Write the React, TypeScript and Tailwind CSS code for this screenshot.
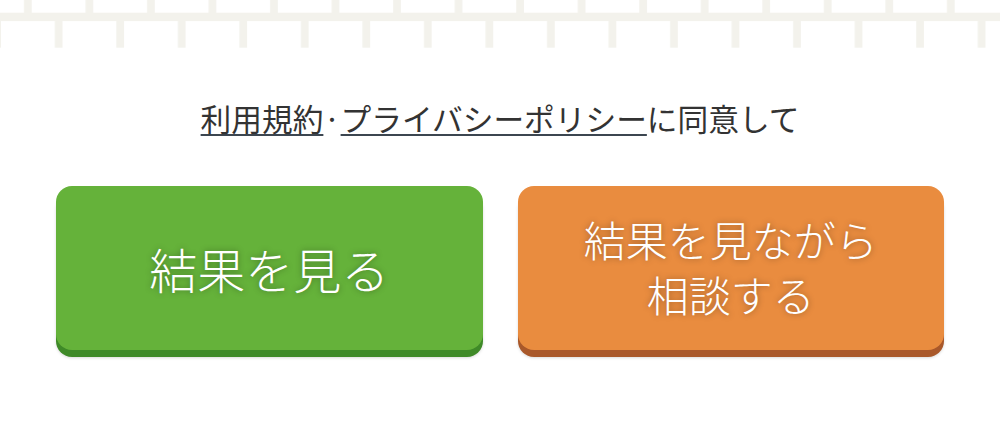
import React from "react";

function Bricks() {
  return (
    <svg width="1000" height="48" viewBox="0 0 1000 48" className="block w-full h-[48px]" aria-hidden="true">
      <defs>
        <pattern id="brick" x="0" y="0" width="61.53" height="48" patternUnits="userSpaceOnUse">
          <rect x="24" y="0" width="7.7" height="13" fill="#f3f2ec" />
          <rect x="0" y="12.7" width="61.53" height="8.4" fill="#f3f2ec" />
          <rect x="54.8" y="21" width="7.7" height="26.7" fill="#f3f2ec" />
          <rect x="-6.73" y="21" width="7.7" height="26.7" fill="#f3f2ec" />
        </pattern>
      </defs>
      <rect x="0" y="0" width="1000" height="48" fill="url(#brick)" />
    </svg>
  );
}

export default function App() {
  return (
    <div
      className="w-[1000px] h-[422px] bg-white overflow-hidden"
      style={{ fontFamily: '"Noto Sans CJK JP", "Noto Sans", sans-serif' }}
    >
      <Bricks />
      <div className="mt-[50px] flex justify-center text-[30.7px] leading-[40px] text-[#333333]">
        <span>
          <a className="underline decoration-[2px] underline-offset-[3px] decoration-[#3c4650] text-[#333333]">利用規約</a>
          <span>·</span>
          <a className="underline decoration-[2px] underline-offset-[3px] decoration-[#3c4650] text-[#333333]">プライバシーポリシー</a>
          <span>に同意して</span>
        </span>
      </div>
      <div className="mt-[48px] flex gap-[35px] px-[56px]">
        <button className="flex-1 h-[164px] rounded-[16px] bg-[#65b23a] shadow-[0_7px_0_#3f8a28,0_8px_3px_rgba(0,0,0,0.15)] flex items-center justify-center text-white font-light text-[48px] leading-[56px] [text-shadow:0_0_6px_rgba(0,0,0,0.35)]">
          結果を見る
        </button>
        <button className="flex-1 h-[164px] rounded-[16px] bg-[#e98c3f] shadow-[0_7px_0_#a9582a,0_8px_3px_rgba(0,0,0,0.15)] flex flex-col items-center justify-center pb-[4px] text-white font-light text-[42px] leading-[55px] [text-shadow:0_0_6px_rgba(0,0,0,0.35)]">
          <span>結果を見ながら</span>
          <span>相談する</span>
        </button>
      </div>
    </div>
  );
}
